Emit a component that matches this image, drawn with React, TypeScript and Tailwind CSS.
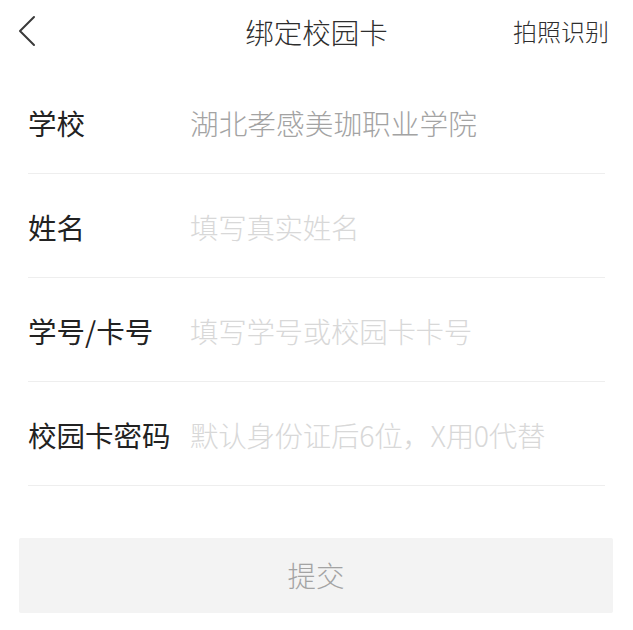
import React from 'react';

const font = { fontFamily: '"Noto Sans CJK SC", "Noto Sans", sans-serif' };

type Field = { label: string; value?: string; placeholder: string };

const fields: Field[] = [
  { label: '学校', value: '湖北孝感美珈职业学院', placeholder: '' },
  { label: '姓名', placeholder: '填写真实姓名' },
  { label: '学号/卡号', placeholder: '填写学号或校园卡卡号' },
  { label: '校园卡密码', placeholder: '默认身份证后6位，X用0代替' },
];

const App: React.FC = () => {
  return (
    <div className="w-[633px] min-h-[630px] bg-white font-light" style={font}>
      <div className="relative flex h-[70px] items-center justify-center pb-[6px]">
        <button type="button" className="absolute left-[17px] top-[15px] p-0">
          <svg width="20" height="32" viewBox="0 0 20 32" fill="none">
            <path d="M17 2 L3 16 L17 30" stroke="#3a3a3a" strokeWidth="2" strokeLinecap="round" strokeLinejoin="round" />
          </svg>
        </button>
        <h1 className="text-[28.5px] leading-none text-[#2e2e2e]">绑定校园卡</h1>
        <span className="absolute right-[24px] top-[19px] text-[24px] leading-none text-[#2e2e2e]">拍照识别</span>
      </div>

      <div className="mx-[28px]">
        {fields.map((f) => (
          <div key={f.label} className="flex h-[104px] items-center border-b border-[#eeeeee] pt-[4px]">
            <div className="w-[162px] shrink-0 text-[28.5px] font-normal leading-none text-[#222]">{f.label}</div>
            {f.value ? (
              <div className="text-[28.7px] leading-none text-[#a3a3a3] whitespace-nowrap">{f.value}</div>
            ) : (
              <div className="text-[28.5px] leading-none text-[#d8d8d8] whitespace-nowrap tracking-[-0.3px]">{f.placeholder}</div>
            )}
          </div>
        ))}
      </div>

      <div className="ml-[19px] mr-[20px] mt-[52px]">
        <button
          type="button"
          className="flex h-[75px] w-full items-center justify-center rounded-[2px] bg-[#f3f3f3] text-[28.5px] leading-none text-[#a3a3a3]"
        >
          提交
        </button>
      </div>
    </div>
  );
};

export default App;
